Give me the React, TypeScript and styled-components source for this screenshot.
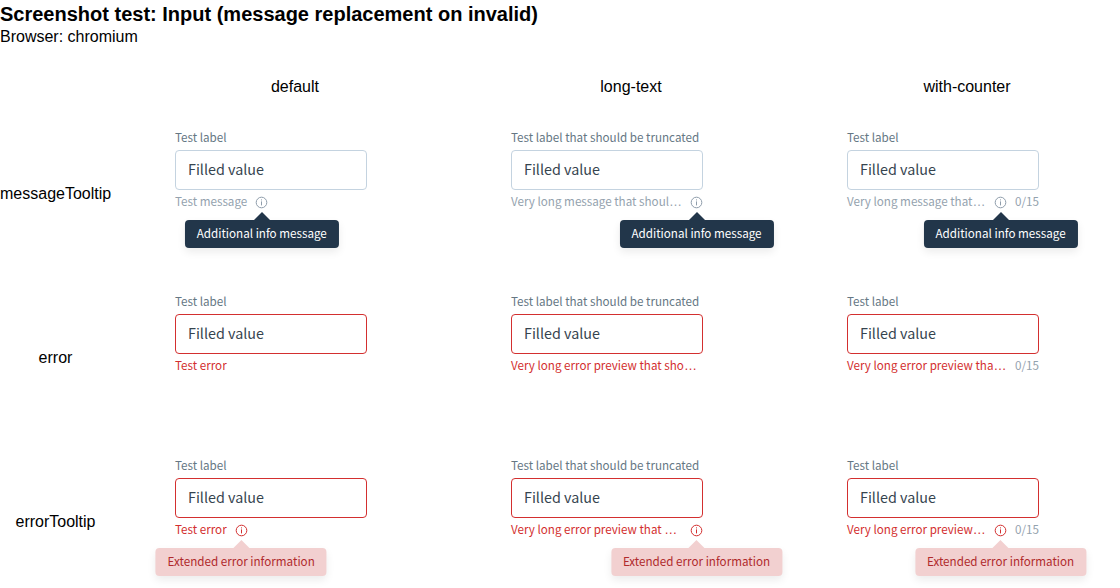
import React from 'react';
import styled, { createGlobalStyle } from 'styled-components';

const Global = createGlobalStyle`
  body { margin: 0; background: #fff; overflow: hidden; font: 16px/normal "Liberation Sans", Arial, sans-serif; color: #000; }
  * { box-sizing: border-box; }
`;
const Page = styled.main`width: 1120px; height: 588px; overflow: hidden;`;
const Title = styled.h1`margin: 0; padding-top: 3px; font-size: 20px; line-height: 23px; font-weight: 700;`;
const Browser = styled.div`padding-top: 2px; line-height: 18px; height: 29px;`;
const Grid = styled.div`
  display: grid; grid-template-columns: 111px repeat(3, 336px);
  grid-template-rows: 56px repeat(3, 164px); padding-top: 1px;
`;
const ColumnTitle = styled.div`padding: 22px 0 0 32px; width: 336px; text-align: center; line-height: 18px;`;
const RowTitle = styled.div`text-align: center; padding-top: 73px; line-height: 18px;`;
const Cell = styled.div`padding: 17px 0 0 64px;`;
const Field = styled.div`width: 192px; font-family: "Noto Sans CJK SC", sans-serif;`;
const Label = styled.div`font-size: 11.65px; line-height: 16px; color: #657784; white-space: nowrap; margin-bottom: 5px;`;
const Box = styled.div<{ $error: boolean }>`
  height: 40px; border: 1px solid ${p => (p.$error ? '#d32f2f' : '#c4d3e0')}; border-radius: 4px;
  padding: 0 12px; font-size: 14.34px; line-height: 36px; color: #36444f;
`;
const Footer = styled.div`display: flex; height: 24px; padding-top: 3px; font-size: 11.65px; line-height: 16px;`;
const Message = styled.span<{ $error: boolean; $fill: boolean }>`
  flex: ${p => (p.$fill ? '1 0 0' : 'none')}; white-space: nowrap; color: ${p => (p.$error ? '#d32f2f' : '#94a2ae')};
`;
const Dots = styled.span`font-family: "Liberation Sans", sans-serif; font-size: 13px; line-height: 1;`;
const Counter = styled.span`flex: none; margin-left: 8px; color: #94a2ae;`;
const Anchor = styled.span<{ $error: boolean }>`
  position: relative; flex: none; width: 13px; height: 16px; margin-left: 8px; color: ${p => (p.$error ? '#d32f2f' : '#8f9dab')};
`;
const Icon = styled.svg`display: block; width: 13px; height: 13px; margin-top: 3px;`;
const Tip = styled.div<{ $error: boolean }>`
  position: absolute; top: 27px; left: 50%; transform: translateX(-50%); height: 28px; padding: 5px 12px; border-radius: 4px;
  white-space: nowrap; line-height: 16px; box-shadow: 0 4px 8px rgba(0, 0, 0, 0.08);
  background: ${p => (p.$error ? '#f2d0d0' : '#22364a')}; color: ${p => (p.$error ? '#b02a2c' : '#fff')};
  &::before {
    content: ''; position: absolute; left: 50%; top: -8px; margin-left: -8px;
    border: 8px solid transparent; border-top: 0; border-bottom-color: ${p => (p.$error ? '#f2d0d0' : '#22364a')};
  }
`;

const columns = ['default', 'long-text', 'with-counter'];
const rows = [
  { name: 'messageTooltip', error: false, tip: 'Additional info message', messages: ['Test message', 'Very long message that shoul…', 'Very long message that…'] },
  { name: 'error', error: true, tip: '', messages: ['Test error', 'Very long error preview that sho…', 'Very long error preview tha…'] },
  { name: 'errorTooltip', error: true, tip: 'Extended error information', messages: ['Test error', 'Very long error preview that …', 'Very long error preview…'] },
];

function InfoIcon() {
  return (
    <Icon viewBox="0 0 13 13" fill="none" stroke="currentColor">
      <circle cx="6.5" cy="6.5" r="5.3" />
      <path d="M6.5 5.4V9.4M6.5 3.4V4.4" />
    </Icon>
  );
}

export default function App() {
  return (
    <Page>
      <Global />
      <Title>Screenshot test: Input (message replacement on invalid)</Title>
      <Browser>Browser: chromium</Browser>
      <Grid>
        <span />
        {columns.map(c => <ColumnTitle key={c}>{c}</ColumnTitle>)}
        {rows.map(({ name, error, tip, messages }) => (
          <React.Fragment key={name}>
            <RowTitle>{name}</RowTitle>
            {columns.map((c, x) => (
              <Cell key={c}>
                <Field>
                  <Label>{x === 1 ? 'Test label that should be truncated' : 'Test label'}</Label>
                  <Box $error={error}>Filled value</Box>
                  <Footer>
                    <Message $error={error} $fill={x > 0}>
                      {messages[x].replace('…', '')}{x > 0 && <Dots>…</Dots>}
                    </Message>
                    {tip && <Anchor $error={error}><InfoIcon /><Tip $error={error}>{tip}</Tip></Anchor>}
                    {x === 2 && <Counter>0/15</Counter>}
                  </Footer>
                </Field>
              </Cell>
            ))}
          </React.Fragment>
        ))}
      </Grid>
    </Page>
  );
}
